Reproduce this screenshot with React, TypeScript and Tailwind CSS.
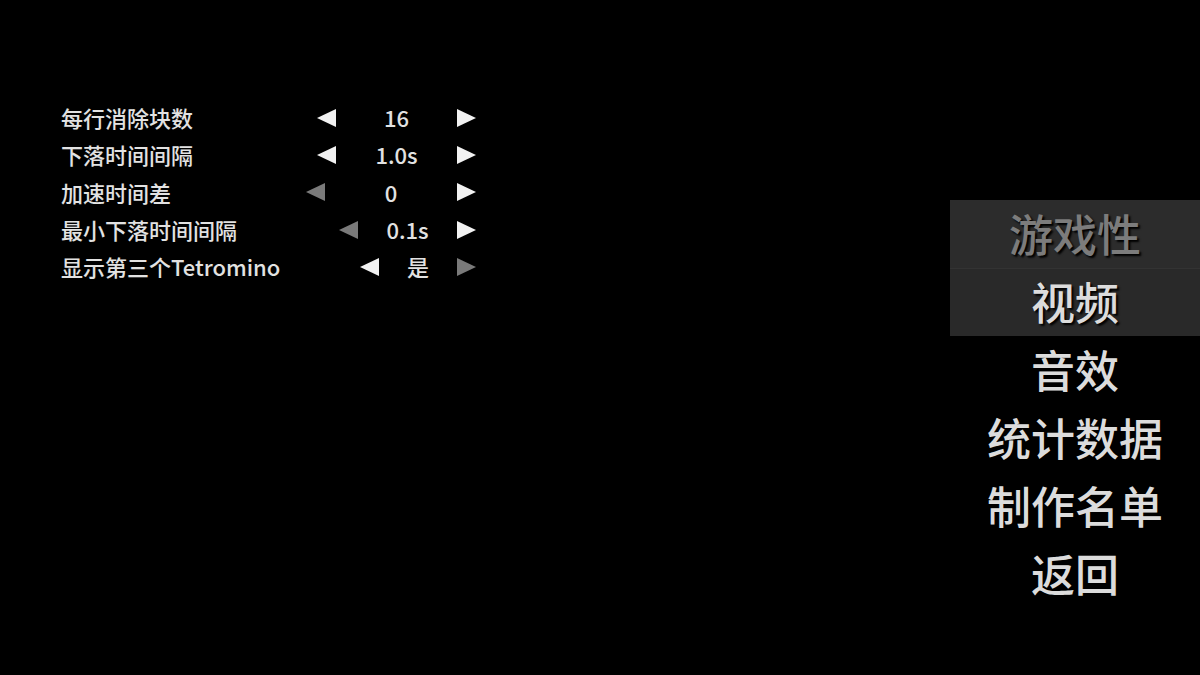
import React from "react";

const FONT = { fontFamily: '"Noto Sans CJK SC", "Noto Sans", sans-serif' };

type Row = { label: string; value: string; width: number; leftOff?: boolean; rightOff?: boolean };

const rows: Row[] = [
  { label: "每行消除块数", value: "16", width: 121 },
  { label: "下落时间间隔", value: "1.0s", width: 121 },
  { label: "加速时间差", value: "0", width: 132, leftOff: true },
  { label: "最小下落时间间隔", value: "0.1s", width: 99, leftOff: true },
  { label: "显示第三个Tetromino", value: "是", width: 78, rightOff: true },
];

const menu = ["游戏性", "视频", "音效", "统计数据", "制作名单", "返回"];

function Arrow({ dir, off }: { dir: "left" | "right"; off?: boolean }) {
  return (
    <svg width="19" height="18" viewBox="0 0 19 18" className="shrink-0">
      <polygon
        points={dir === "left" ? "19,0 19,18 0,9" : "0,0 0,18 19,9"}
        fill={off ? "#7a7a7a" : "#f2f2f2"}
      />
    </svg>
  );
}

export default function App() {
  return (
    <div style={FONT} className="relative flex h-[675px] w-[1200px] overflow-hidden bg-black text-[#e2e2e2]">
      {/* Settings list */}
      <div className="w-[476px] pl-[61px] pt-[99px]">
        {rows.map((r) => (
          <div key={r.label} className="flex h-[37.3px] items-center justify-between text-[22px] font-medium">
            <span>{r.label}</span>
            <div className="flex items-center">
              <Arrow dir="left" off={r.leftOff} />
              <span className="text-center" style={{ width: r.width }}>
                {r.value}
              </span>
              <Arrow dir="right" off={r.rightOff} />
            </div>
          </div>
        ))}
      </div>

      <div className="flex-1" />

      {/* Side menu */}
      <div className="w-[250px] pt-[200px]">
        {menu.map((m, i) => (
          <div
            key={m}
            className={`flex h-[68px] items-center justify-center pb-[3px] text-[44px] font-medium leading-none [text-shadow:2px_2px_2px_#000] ${
              i === 0 ? "bg-[#2c2c2c] text-[#7c7c7c]" : i === 1 ? "border-t border-[#333] bg-[#292929] text-[#dcdcdc]" : "text-[#dcdcdc]"
            }`}
          >
            {m}
          </div>
        ))}
      </div>
    </div>
  );
}
